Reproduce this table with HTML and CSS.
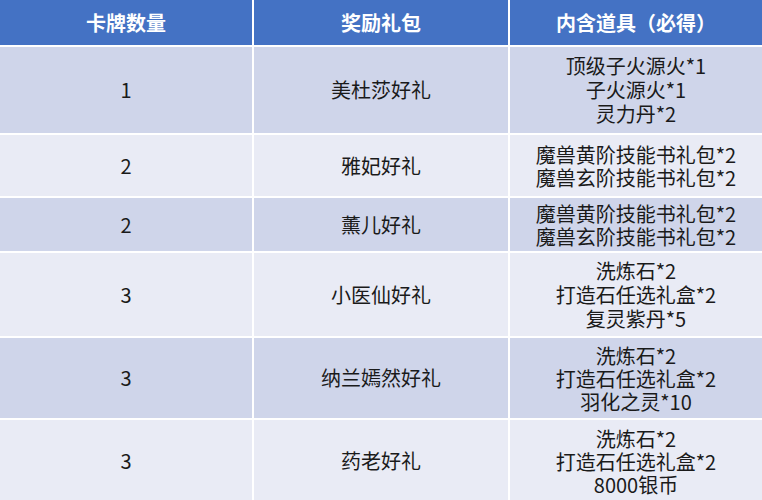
FILE: index.html
```html
<!DOCTYPE html>
<html lang="zh-CN">
<head>
<meta charset="utf-8">
<title>卡牌奖励</title>
<link rel="stylesheet" href="styles.css">
</head>
<body>
<div class="table">
  <div class="cell head">卡牌数量</div>
  <div class="cell head">奖励礼包</div>
  <div class="cell head">内含道具（必得）</div>

  <div class="cell odd">1</div>
  <div class="cell odd">美杜莎好礼</div>
  <div class="cell odd items">顶级子火源火*1<br>子火源火*1<br>灵力丹*2</div>

  <div class="cell even">2</div>
  <div class="cell even">雅妃好礼</div>
  <div class="cell even items tight">魔兽黄阶技能书礼包*2<br>魔兽玄阶技能书礼包*2</div>

  <div class="cell odd">2</div>
  <div class="cell odd">薰儿好礼</div>
  <div class="cell odd items tight">魔兽黄阶技能书礼包*2<br>魔兽玄阶技能书礼包*2</div>

  <div class="cell even">3</div>
  <div class="cell even">小医仙好礼</div>
  <div class="cell even items">洗炼石*2<br>打造石任选礼盒*2<br>复灵紫丹*5</div>

  <div class="cell odd">3</div>
  <div class="cell odd">纳兰嫣然好礼</div>
  <div class="cell odd items tight">洗炼石*2<br>打造石任选礼盒*2<br>羽化之灵*10</div>

  <div class="cell even">3</div>
  <div class="cell even">药老好礼</div>
  <div class="cell even items tight">洗炼石*2<br>打造石任选礼盒*2<br>8000银币</div>
</div>
</body>
</html>
```

FILE: styles.css
```css
html, body {
  margin: 0;
  padding: 0;
  background: #ffffff;
}

body {
  font-family: "Noto Sans CJK SC", "Noto Sans", sans-serif;
  font-size: 20px;
  color: #1a1a1a;
  overflow: hidden;
}

.table {
  display: grid;
  grid-template-columns: 252px 254px 252px;
  grid-template-rows: 45px 86px 61px 53px 83px 80px 82px;
  column-gap: 2px;
  row-gap: 2px;
  background: #ffffff;
  width: 762px;
}

.cell {
  display: flex;
  align-items: center;
  justify-content: center;
  text-align: center;
  line-height: 24px;
}

.head {
  background: #4472c4;
  color: #ffffff;
  font-weight: bold;
}

.odd {
  background: #cfd5ea;
}

.even {
  background: #e9ebf5;
}

.items.tight {
  line-height: 23px;
}
```
